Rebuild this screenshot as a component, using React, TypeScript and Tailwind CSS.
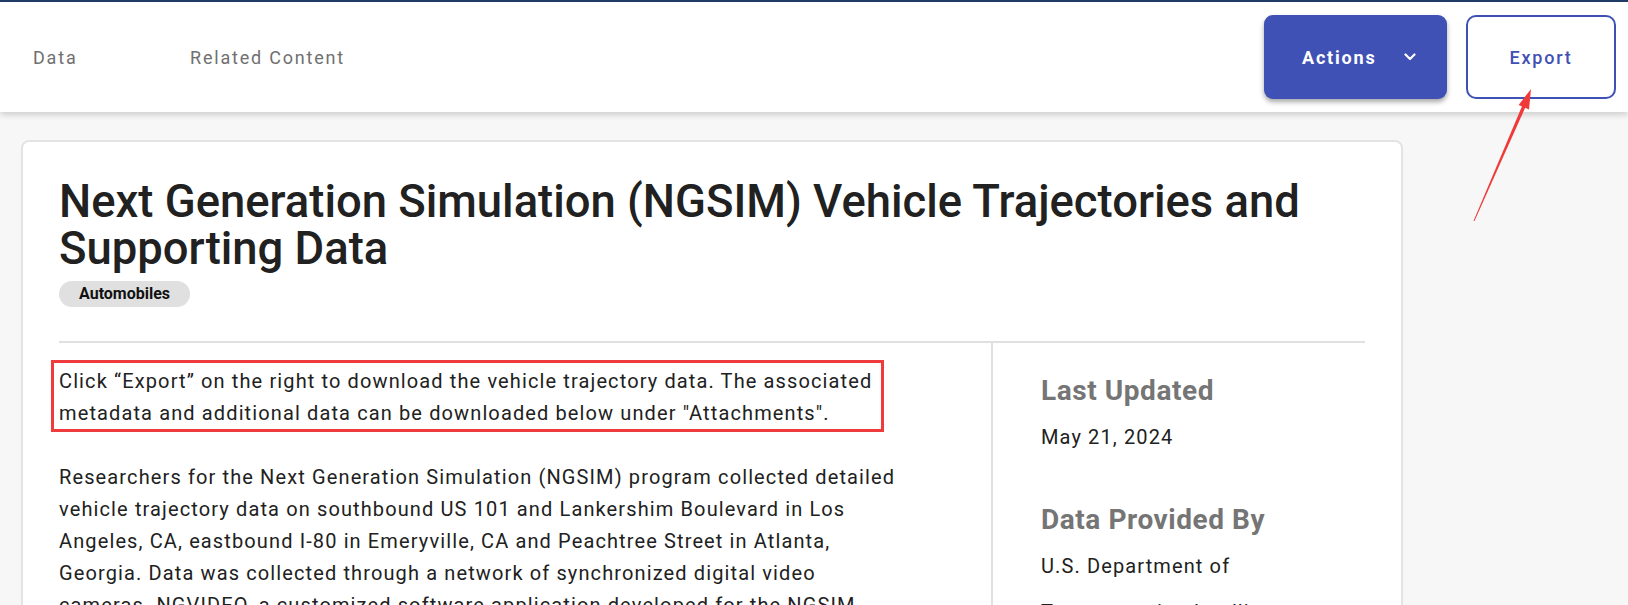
import React from "react";

function Chevron() {
  return (
    <svg width="12" height="8" viewBox="0 0 12 8" fill="none">
      <path d="M1.5 1.5 L6 6 L10.5 1.5" stroke="white" strokeWidth="2.2" strokeLinecap="round" strokeLinejoin="round" />
    </svg>
  );
}

function Header() {
  return (
    <header className="relative z-10 flex h-[112px] items-center justify-between border-t-2 border-[#1f3a64] bg-white pr-[12px] shadow-[0_3px_6px_rgba(0,0,0,0.16)]">
      <nav className="flex items-center text-[18px] tracking-[0.1em] text-[#707070]">
        <span className="w-[190px] pl-[33px]">Data</span>
        <span>Related Content</span>
      </nav>
      <div className="flex items-center gap-[19px]">
        <button className="flex h-[84px] w-[183px] items-center rounded-[9px] bg-[#3f51b5] pl-[38px] text-[18px] font-bold tracking-[0.1em] text-white shadow-[0_3px_5px_rgba(0,0,0,0.35)]">
          <span>Actions</span>
          <span className="ml-[28px] flex">
            <Chevron />
          </span>
        </button>
        <button className="h-[84px] w-[150px] rounded-[10px] border-2 border-[#3f51b5] bg-white text-[18px] font-medium tracking-[0.1em] text-[#3f51b5]">
          Export
        </button>
      </div>
    </header>
  );
}

function Arrow() {
  // hand-drawn annotation pointing at the Export button
  return (
    <svg className="pointer-events-none absolute left-[1450px] top-[80px] z-20" width="100" height="160" viewBox="0 0 100 160">
      <polygon points="23.5,141 24.5,141 75.4,27.2 72.2,25.8" fill="#f03a3a" />
      <polygon points="81,9 79,29.5 68.6,25" fill="#f03a3a" />
    </svg>
  );
}

export default function App() {
  return (
    <div className="relative min-h-[605px] bg-[#f7f7f7] font-['Roboto',sans-serif]">
      <Header />
      <Arrow />
      <main className="pt-[28px] pl-[21px]">
        <section className="w-[1382px] rounded-[8px] border-2 border-[#e3e3e3] bg-white px-[36px] pt-[36px] pb-[40px]">
          <h1 className="text-[45.4px] font-medium leading-[47px] text-[#212121]">
            Next Generation Simulation (NGSIM) Vehicle Trajectories and Supporting Data
          </h1>
          <span className="mt-[9px] inline-flex h-[26px] items-center rounded-full bg-[#e0e0e0] px-[20px] text-[16px] font-bold text-[#111]">
            Automobiles
          </span>
          <div className="mt-[34px] flex border-t-2 border-[#e0e0e0]">
            <div className="w-[932px] pt-[22px] text-[20px] leading-[32px] tracking-[1.12px] text-[#212121]">
              <div className="relative w-[842px]">
                <p>
                  Click “Export” on the right to download the vehicle trajectory data. The associated metadata and additional data can be downloaded below under "Attachments".
                </p>
                <div className="pointer-events-none absolute left-[-8px] top-[-5px] h-[72px] w-[833px] border-[3px] border-[#ef3b3b]" />
              </div>
              <p className="mt-[32px] w-[842px]">
                Researchers for the Next Generation Simulation (NGSIM) program collected detailed vehicle trajectory data on southbound US 101 and Lankershim Boulevard in Los Angeles, CA, eastbound I-80 in Emeryville, CA and Peachtree Street in Atlanta, Georgia. Data was collected through a network of synchronized digital video cameras. NGVIDEO, a customized software application developed for the NGSIM program, transcribed the vehicle trajectory data from the video. This vehicle trajectory data provided the precise location of each vehicle within the study area every one-tenth of a second, resulting in detailed lane positions and locations relative to other vehicles.
              </p>
            </div>
            <aside className="flex-1 border-l-2 border-[#e0e0e0] pl-[48px] pt-[31px]">
              <h2 className="text-[28px] font-bold leading-[34px] tracking-[0.02em] text-[#757575]">Last Updated</h2>
              <p className="mt-[6px] text-[20px] leading-[46px] tracking-[1.12px] text-[#212121]">May 21, 2024</p>
              <h2 className="mt-[43px] text-[28px] font-bold leading-[34px] tracking-[0.02em] text-[#757575]">Data Provided By</h2>
              <p className="mt-[6px] w-[300px] text-[20px] leading-[46px] tracking-[1.12px] text-[#212121]">
                U.S. Department of Transportation Intelligent Transportation Systems Joint Program Office (ITS JPO)
              </p>
            </aside>
          </div>
        </section>
      </main>
    </div>
  );
}
